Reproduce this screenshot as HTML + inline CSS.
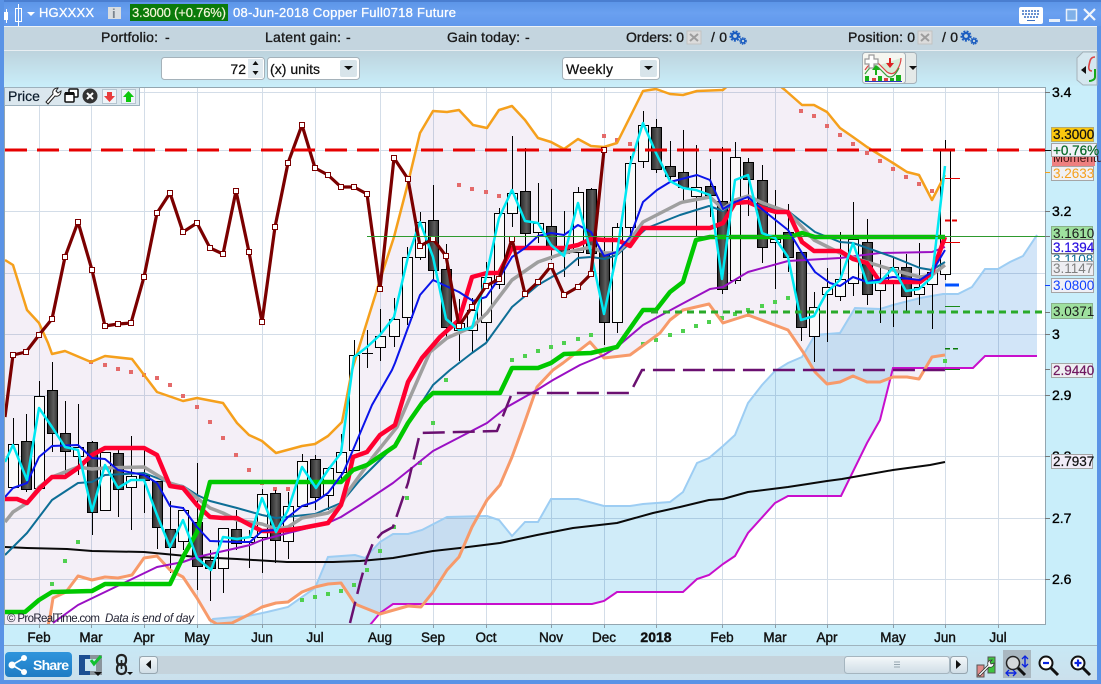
<!DOCTYPE html>
<html><head><meta charset="utf-8"><title>HGXXXX</title>
<style>
html,body{margin:0;padding:0;width:1101px;height:684px;overflow:hidden;background:#5e97ea}
svg{display:block;position:absolute;left:0;top:0}
text{font-family:"Liberation Sans",sans-serif;font-size:13px}
.t{fill:#fff;font-size:13px;stroke:#fff;stroke-width:.3px}
.b{fill:#1a1a1a;stroke:#1a1a1a;stroke-width:.35px;font-size:14px}
.m{fill:#111;text-anchor:middle;stroke:#111;stroke-width:.4px;font-size:13.5px}
.a{fill:#000;stroke:#000;stroke-width:.35px;font-size:14px}
.c{fill:#111;font-size:14px;stroke:#111;stroke-width:.25px}
.l{font-size:13.5px}
</style></head><body>
<svg width="1101" height="684" viewBox="0 0 1101 684">
<defs>
<linearGradient id="gt" x1="0" y1="0" x2="0" y2="1"><stop offset="0" stop-color="#5a93e6"/><stop offset=".5" stop-color="#6aa0f0"/><stop offset="1" stop-color="#6098ec"/></linearGradient>
<linearGradient id="gb" x1="0" y1="0" x2="0" y2="1"><stop offset="0" stop-color="#bdd3dd"/><stop offset="1" stop-color="#c9eefa"/></linearGradient>
<linearGradient id="gf" x1="0" y1="0" x2="0" y2="1"><stop offset="0" stop-color="#c8e8f5"/><stop offset="1" stop-color="#cbe0ec"/></linearGradient>
<linearGradient id="gd" x1="0" y1="0" x2="1" y2="0"><stop offset="0" stop-color="#2a2a2a"/><stop offset=".6" stop-color="#5c5c5c"/><stop offset="1" stop-color="#333"/></linearGradient>
<linearGradient id="gs" x1="0" y1="0" x2="0" y2="1"><stop offset="0" stop-color="#2f95dc"/><stop offset="1" stop-color="#1f7cc4"/></linearGradient>
<linearGradient id="gw" x1="0" y1="0" x2="0" y2="1"><stop offset="0" stop-color="#f4f8fa"/><stop offset="1" stop-color="#cfdde6"/></linearGradient>
<clipPath id="cc"><rect x="4" y="87" width="1041" height="537"/></clipPath>
</defs>

<!-- frame -->
<rect width="1101" height="684" fill="#5a93e6"/>
<rect x="0" y="0" width="1101" height="26" fill="url(#gt)"/>
<rect x="0" y="0" width="1101" height="2" fill="#4a7ed0"/>
<rect x="4" y="26" width="1093" height="25" fill="#c4d5df"/>
<rect x="4" y="26" width="1093" height="1" fill="#eef3f7"/>
<rect x="4" y="50" width="1093" height="1" fill="#e8eef2"/>
<rect x="4" y="51" width="1093" height="36" fill="url(#gb)"/>
<rect x="4" y="624" width="1093" height="21" fill="#c9eefa"/>
<rect x="4" y="645" width="1093" height="1" fill="#9fb3bd"/>
<rect x="4" y="646" width="1093" height="34" fill="url(#gf)"/>
<rect x="1045" y="87" width="52" height="537" fill="#c9eefa"/>

<!-- chart -->
<g clip-path="url(#cc)">
<rect x="4" y="87" width="1041" height="537" fill="#fff"/>
<g stroke="#d3dde8" stroke-width="1" shape-rendering="crispEdges" fill="none">
<path d="M39.5 87V624M91.5 87V624M144.5 87V624M197.5 87V624M262.5 87V624M315.5 87V624M380.5 87V624M433.5 87V624M486.5 87V624M551.5 87V624M604.5 87V624M656.5 87V624M722.5 87V624M775.5 87V624M827.5 87V624M893.5 87V624M945.5 87V624M998.5 87V624"/>
<path d="M4 92.5H1045M4 150.5H1045M4 211.5H1045M4 273.5H1045M4 334.5H1045M4 395.5H1045M4 456.5H1045M4 518.5H1045M4 579.5H1045"/>
</g>
<polygon style="mix-blend-mode:multiply" fill="#f4eff7" points="5,260 13,265 27,310 39,323 48,343 52,354 65,351 91,362 105,356 132,359 157,392 183,401 197,398 223,403 237,423 249,435 262,441 276,453 302,446 315,444 328,436 342,422 352,370 380,280 394,237 408,183 420,133 433,111 447,112 459,110 473,125 487,128 499,110 512,106 525,120 538,138 551,142 564,149 578,139 591,146 604,147 617,143 643,91 656,89 670,94 683,95 697,91 723,90 732,82 775,82 785,90 802,105 814,105 827,112 840,128 853,137 867,147 880,155 893,163 907,172 919,175 932,200 945,175 945,355 932,357 919,379 907,377 893,377 880,382 867,382 853,376 840,382 827,384 815,372 803,352 788,330 748,315 723,323 709,304 683,310 670,320 660,333 630,355 604,358 590,342 563,363 553,370 537,387 523,427 512,457 500,485 487,500 472,527 459,557 447,570 433,592 421,607 408,606 380,614 355,604 341,583 328,584 315,587 302,592 288,602 276,603 262,607 248,615 232,623 217,624 210,620 197,598 183,577 170,570 157,556 144,558 132,575 118,578 105,577 92,580 78,576 66,592 53,598 50,617 47,630 5,630"/>
<polygon style="mix-blend-mode:multiply" fill="#d0ecf9" points="210,622 213,619 235,617 248,616 267,612 288,607 302,597 315,588 328,557 355,555 365,558 380,542 393,534 408,534 422,530 447,517 487,516 499,520 512,536 525,522 538,522 551,499 578,499 604,506 630,506 643,504 670,502 683,492 697,463 709,458 723,446 735,435 748,403 762,385 775,371 788,363 802,357 815,335 840,333 855,308 880,309 893,305 920,298 943,294 945,294 945,368 893,368 880,420 867,443 841,496 788,496 775,503 748,533 735,556 723,564 709,575 697,579 683,592 617,592 604,601 592,604 393,604 380,613 370,625 210,625"/>
<polygon style="mix-blend-mode:multiply" fill="#d2e5f8" points="945,294 958,294 972,287 985,269 998,269 1010,262 1023,256 1037,235 1037,356 985,356 973,368 945,368"/>
<polyline fill="none" stroke="#9dcdf3" stroke-width="2" points="210,622 213,619 235,617 248,616 267,612 288,607 302,597 315,588 328,557 355,555 365,558 380,542 393,534 408,534 422,530 447,517 487,516 499,520 512,536 525,522 538,522 551,499 578,499 604,506 630,506 643,504 670,502 683,492 697,463 709,458 723,446 735,435 748,403 762,385 775,371 788,363 802,357 815,335 840,333 855,308 880,309 893,305 920,298 943,294 958,294 972,287 985,269 998,269 1010,262 1023,256 1037,235"/>
<polyline fill="none" stroke="#c80fcc" stroke-width="2" points="370,625 380,613 393,604 592,604 604,601 617,592 683,592 697,579 709,575 723,564 735,556 748,533 775,503 788,496 841,496 867,443 880,420 893,368 973,368 985,356 1037,356"/>

<!-- red / green dots -->
<g fill="#e46a6a" shape-rendering="crispEdges">
<rect x="89" y="360" width="4" height="4"/><rect x="103" y="363" width="4" height="4"/><rect x="116" y="367" width="4" height="4"/><rect x="129" y="370" width="4" height="4"/><rect x="142" y="373" width="4" height="4"/><rect x="155" y="376" width="4" height="4"/><rect x="168" y="383" width="4" height="4"/><rect x="181" y="394" width="4" height="4"/><rect x="195" y="405" width="4" height="4"/><rect x="208" y="420" width="4" height="4"/><rect x="221" y="436" width="4" height="4"/><rect x="234" y="453" width="4" height="4"/><rect x="247" y="468" width="4" height="4"/><rect x="260" y="481" width="4" height="4"/><rect x="273" y="487" width="4" height="4"/><rect x="286" y="487" width="4" height="4"/>
<rect x="457" y="183" width="4" height="4"/><rect x="470" y="187" width="4" height="4"/><rect x="484" y="190" width="4" height="4"/><rect x="497" y="194" width="4" height="4"/><rect x="602" y="134" width="4" height="4"/><rect x="615" y="138" width="4" height="4"/><rect x="628" y="142" width="4" height="4"/>
<rect x="799" y="109" width="4" height="4"/><rect x="812" y="114" width="4" height="4"/><rect x="825" y="124" width="4" height="4"/><rect x="838" y="133" width="4" height="4"/><rect x="851" y="142" width="4" height="4"/><rect x="865" y="151" width="4" height="4"/><rect x="878" y="159" width="4" height="4"/><rect x="891" y="167" width="4" height="4"/><rect x="904" y="175" width="4" height="4"/><rect x="917" y="182" width="4" height="4"/><rect x="930" y="189" width="4" height="4"/>
</g>
<g fill="#4fd04f" shape-rendering="crispEdges">
<rect x="76" y="540" width="4" height="4"/><rect x="63" y="559" width="4" height="4"/><rect x="50" y="582" width="4" height="4"/><rect x="300" y="598" width="4" height="4"/><rect x="313" y="595" width="4" height="4"/><rect x="326" y="592" width="4" height="4"/><rect x="339" y="589" width="4" height="4"/><rect x="352" y="583" width="4" height="4"/><rect x="365" y="568" width="4" height="4"/><rect x="378" y="549" width="4" height="4"/><rect x="392" y="525" width="4" height="4"/><rect x="405" y="496" width="4" height="4"/><rect x="418" y="461" width="4" height="4"/><rect x="431" y="421" width="4" height="4"/><rect x="444" y="378" width="4" height="4"/>
<rect x="510" y="358" width="4" height="4"/><rect x="523" y="354" width="4" height="4"/><rect x="536" y="349" width="4" height="4"/><rect x="549" y="345" width="4" height="4"/><rect x="562" y="341" width="4" height="4"/><rect x="576" y="337" width="4" height="4"/><rect x="589" y="333" width="4" height="4"/><rect x="641" y="342" width="4" height="4"/><rect x="654" y="338" width="4" height="4"/><rect x="668" y="333" width="4" height="4"/><rect x="681" y="329" width="4" height="4"/><rect x="694" y="324" width="4" height="4"/><rect x="707" y="320" width="4" height="4"/><rect x="720" y="316" width="4" height="4"/><rect x="733" y="312" width="4" height="4"/><rect x="746" y="308" width="4" height="4"/><rect x="760" y="304" width="4" height="4"/><rect x="773" y="300" width="4" height="4"/><rect x="786" y="296" width="4" height="4"/><rect x="943" y="359" width="4" height="4"/>
</g>

<!-- candles -->
<g shape-rendering="crispEdges" stroke="#000" stroke-width="1">
<path fill="none" d="M13.5 418V487M26.5 414V492M39.5 381V488M52.5 362V452M65.5 401V475M78.5 404V475M92.5 441V535M105.5 452V511M118.5 450V517M131.5 436V530M144.5 450V513M157.5 481V549M170.5 501V573M183.5 507V550M197.5 463V590M210.5 550V601M223.5 528V593M236.5 510V550M249.5 530V568M262.5 489V573M275.5 490V563M288.5 492V559M302.5 454V507M315.5 455V510M328.5 467V510M341.5 434V480M354.5 340V450M367.5 330V368M362 353.5H373M380.5 309V361M394.5 298V347M407.5 247V325M420.5 212V260M433.5 185V280M446.5 244V338M459.5 299V361M472.5 298V353M486.5 262V341M499.5 208V289M512.5 136V227M525.5 148V247M538.5 183V243M551.5 189V260M564.5 211V277M578.5 187V266M591.5 188V253M604.5 237V345M617.5 223V333M630.5 156V237M643.5 111V168M656.5 119V173M670.5 141V180M683.5 130V202M696.5 145V237M710.5 159V217M722.5 147V294M735.5 142V284M748.5 158V216M762.5 165V263M775.5 190V289M788.5 204V272M801.5 252V341M814.5 292V362M827.5 268V342M840.5 232V301M853.5 202V296M867.5 219V305M880.5 260V323M893.5 257V327M906.5 254V313M919.5 243V305M932.5 265V329M945.5 140V280"/>
<g fill="#fafafa">
<rect x="8.5" y="444.5" width="10" height="43"/><rect x="34.5" y="396.5" width="10" height="92"/><rect x="73.5" y="447.5" width="10" height="9"/><rect x="100.5" y="452.5" width="10" height="58"/><rect x="126.5" y="476.5" width="10" height="11"/><rect x="178.5" y="510.5" width="10" height="31"/><rect x="218.5" y="528.5" width="10" height="40"/><rect x="244.5" y="537.5" width="10" height="5"/><rect x="257.5" y="494.5" width="10" height="43"/><rect x="283.5" y="506.5" width="10" height="35"/><rect x="297.5" y="461.5" width="10" height="45"/><rect x="323.5" y="468.5" width="10" height="27"/><rect x="336.5" y="452.5" width="10" height="20"/><rect x="349.5" y="355.5" width="10" height="95"/>
<rect x="375.5" y="336.5" width="10" height="11"/><rect x="389.5" y="319.5" width="10" height="17"/><rect x="402.5" y="257.5" width="10" height="60"/><rect x="415.5" y="222.5" width="10" height="35"/><rect x="454.5" y="323.5" width="10" height="7"/><rect x="467.5" y="310.5" width="10" height="20"/><rect x="481.5" y="277.5" width="10" height="45"/><rect x="494.5" y="213.5" width="10" height="71"/><rect x="507.5" y="193.5" width="10" height="20"/><rect x="533.5" y="223.5" width="10" height="9"/><rect x="573.5" y="192.5" width="10" height="60"/><rect x="612.5" y="227.5" width="10" height="95"/><rect x="625.5" y="163.5" width="10" height="64"/><rect x="638.5" y="125.5" width="10" height="36"/>
<rect x="691.5" y="187.5" width="10" height="9"/><rect x="730.5" y="157.5" width="10" height="123"/><rect x="770.5" y="239.5" width="10" height="3"/><rect x="809.5" y="307.5" width="10" height="29"/><rect x="822.5" y="287.5" width="10" height="7"/><rect x="835.5" y="279.5" width="10" height="17"/><rect x="848.5" y="239.5" width="10" height="44"/><rect x="875.5" y="280.5" width="10" height="10"/><rect x="888.5" y="267.5" width="10" height="16"/><rect x="914.5" y="287.5" width="10" height="7"/><rect x="927.5" y="272.5" width="10" height="12"/><rect x="940.5" y="150.5" width="10" height="124"/>
</g>
<g fill="url(#gd)">
<rect x="21.5" y="441.5" width="10" height="48"/><rect x="47.5" y="390.5" width="10" height="43"/><rect x="60.5" y="433.5" width="10" height="18"/><rect x="87.5" y="442.5" width="10" height="70"/><rect x="113.5" y="453.5" width="10" height="36"/><rect x="139.5" y="475.5" width="10" height="5"/><rect x="152.5" y="481.5" width="10" height="46"/><rect x="165.5" y="529.5" width="10" height="18"/><rect x="192.5" y="522.5" width="10" height="44"/><rect x="205.5" y="560.5" width="10" height="8"/><rect x="231.5" y="529.5" width="10" height="14"/><rect x="270.5" y="493.5" width="10" height="47"/><rect x="310.5" y="459.5" width="10" height="38"/>
<rect x="428.5" y="220.5" width="10" height="50"/><rect x="441.5" y="269.5" width="10" height="58"/><rect x="520.5" y="191.5" width="10" height="42"/><rect x="546.5" y="226.5" width="10" height="21"/><rect x="559.5" y="247.5" width="10" height="6"/><rect x="586.5" y="189.5" width="10" height="64"/><rect x="599.5" y="252.5" width="10" height="70"/><rect x="651.5" y="127.5" width="10" height="42"/><rect x="665.5" y="166.5" width="10" height="10"/><rect x="678.5" y="172.5" width="10" height="15"/>
<rect x="705.5" y="186.5" width="10" height="9"/><rect x="717.5" y="201.5" width="10" height="88"/><rect x="743.5" y="162.5" width="10" height="17"/><rect x="757.5" y="180.5" width="10" height="67"/><rect x="783.5" y="232.5" width="10" height="25"/><rect x="796.5" y="252.5" width="10" height="75"/><rect x="862.5" y="242.5" width="10" height="52"/><rect x="901.5" y="267.5" width="10" height="29"/>
</g>
</g>

<!-- lines -->
<g fill="none" stroke-linejoin="round">
<polyline stroke="#0a0a0a" stroke-width="2" points="5,547 27,548 67,549 92,551 144,552 197,557 237,559 287,562 333,562 360,561 393,558 433,551 460,548 500,543 537,535 573,528 617,523 653,513 680,507 709,500 723,499 748,492 788,487 827,481 842,479 893,470 930,465 945,462"/>
<polyline stroke="#f79a6a" stroke-width="3" points="47,630 50,617 53,598 66,592 78,576 92,580 105,577 118,578 132,575 144,558 157,556 170,570 183,577 197,598 210,620 217,624 232,623 248,615 262,607 276,603 288,602 302,592 315,587 328,584 341,583 355,604 380,614 408,606 421,607 433,592 447,570 459,557 472,527 487,500 500,485 512,457 523,427 537,387 553,370 563,363 590,342 604,358 630,355 660,333 670,320 683,310 709,304 723,323 748,315 788,330 803,352 815,372 827,384 840,382 853,376 867,382 880,382 893,377 907,377 919,379 932,357 945,355"/>
<polyline stroke="#f5a01c" stroke-width="2.5" points="5,260 13,265 27,310 39,323 48,343 52,354 65,351 91,362 105,356 132,359 157,392 183,401 197,398 223,403 237,423 249,435 262,441 276,453 302,446 315,444 328,436 342,422 352,370 380,280 394,237 408,183 420,133 433,111 447,112 459,110 473,125 487,128 499,110 512,106 525,120 538,138 551,142 564,149 578,139 591,146 604,147 617,143 643,91 656,89 670,94 683,95 697,91 723,90 732,82 775,82 785,90 802,105 814,105 827,112 840,128 853,137 867,147 880,155 893,163 907,172 919,175 932,200 945,175"/>
<polyline stroke="#9a10c4" stroke-width="2" points="53,623 78,605 157,567 183,562 197,557 237,548 250,545 262,540 288,533 328,523 341,517 360,505 393,483 433,451 460,437 487,423 507,407 537,390 553,380 580,365 604,355 617,347 643,325 680,305 710,289 723,287 748,272 788,261 840,258 880,253 932,252 945,247"/>
<polyline stroke="#0d6e96" stroke-width="2" points="5,555 27,533 52,500 78,483 92,482 105,475 144,473 157,478 170,483 183,486 197,495 210,501 237,508 262,515 276,518 315,514 341,503 360,480 380,460 395,445 408,423 422,402 433,385 450,370 472,353 486,343 512,307 538,285 564,270 578,258 591,257 605,259 617,255 630,243 647,228 680,215 709,206 723,211 735,203 748,202 763,207 788,211 815,232 840,242 853,243 893,257 920,268 932,270 945,262"/>
<polyline stroke="#9f9f9f" stroke-width="3.5" points="5,522 13,512 27,503 39,487 52,477 78,467 92,469 105,468 144,467 157,475 170,483 183,487 197,498 210,508 223,513 237,520 262,524 276,529 288,527 302,518 328,513 341,505 347,493 373,457 397,427 422,370 430,352 447,338 472,327 487,313 512,280 538,262 564,253 591,247 605,253 617,253 630,240 643,222 680,203 683,202 710,197 723,209 735,200 748,196 763,203 788,212 802,227 814,240 840,253 867,262 880,266 893,270 920,277 932,275 945,265"/>
<polyline stroke="#ff0030" stroke-width="4.5" points="5,499 17,499 27,503 40,488 52,477 65,477 78,468 92,455 105,448 144,448 157,455 170,486 183,488 197,505 210,517 223,518 237,518 250,525 262,531 276,531 288,530 302,528 328,523 341,505 348,480 353,457 367,452 380,435 395,425 408,382 422,358 440,337 459,320 472,277 487,273 499,273 512,248 564,248 578,245 591,239 604,240 617,240 630,246 643,228 710,228 723,223 735,203 748,202 762,208 776,212 788,212 802,242 814,251 840,251 853,259 867,263 880,282 920,282 932,273 945,237"/>
<polyline stroke="#00c800" stroke-width="4.5" points="5,612 25,612 39,600 52,592 92,591 105,584 170,584 183,557 197,532 210,482 341,482 353,470 367,465 395,446 408,423 422,403 433,393 500,393 512,368 538,368 551,363 564,354 591,353 617,347 643,310 656,310 670,292 683,282 696,240 710,237 790,237 802,233 815,237 945,237"/>
<polyline stroke="#0a14ea" stroke-width="2" points="5,497 13,488 27,483 39,457 52,446 78,445 92,458 105,459 118,470 144,475 157,483 170,506 183,508 197,527 210,541 237,542 250,542 262,531 276,530 288,517 302,506 315,502 328,493 343,473 353,450 372,405 392,370 395,363 420,295 433,280 459,292 473,301 486,297 500,277 512,257 525,248 538,236 551,233 564,235 578,225 591,232 604,256 617,252 630,237 643,202 657,190 670,182 697,175 710,180 723,209 735,202 748,197 763,210 788,230 802,253 815,272 830,283 840,286 853,277 867,282 893,277 920,280 932,272 945,250"/>
<polyline stroke="#00e8f2" stroke-width="2.5" points="5,462 13,445 27,480 39,408 52,427 65,447 78,450 92,511 105,465 118,488 131,480 144,480 157,515 170,547 183,520 197,558 211,570 223,537 237,539 250,537 262,498 276,532 288,510 302,467 316,488 328,470 341,453 354,357 367,347 380,335 394,317 408,257 420,222 433,257 446,319 459,330 472,328 486,277 499,218 512,190 525,221 538,223 551,245 564,256 578,203 591,253 604,314 617,253 630,165 643,123 656,153 670,181 683,188 696,190 710,195 722,279 735,180 748,175 762,233 775,238 788,257 801,320 814,316 827,292 840,280 853,243 867,283 880,282 893,268 906,291 919,289 932,277 945,166"/>
<polyline stroke="#6a1070" stroke-width="2.5" stroke-dasharray="22 8" points="350,623 360,583 367,558 373,543 382,533 393,527 408,483 420,433 497,431 512,393 630,393 642,370 945,370" />
<polyline stroke="#7b0000" stroke-width="3.2" points="5,417 13,355 26,352 39,335 52,319 65,257 78,222 92,270 105,326 118,324 131,323 144,277 157,213 170,193 183,232 197,223 210,248 223,254 236,191 249,252 262,322 275,227 288,163 302,125 315,168 328,175 341,187 354,187 367,194 380,289 394,158 408,179 420,246 433,239 446,256 459,326 472,307 486,286 499,279 512,239 525,294 538,282 551,266 564,295 578,287 591,274 604,150"/>
</g>
<g fill="#fff" stroke="#7b0000" stroke-width="1" shape-rendering="crispEdges">
<path d="M10.5 352.5h5v5h-5zM23.5 349.5h5v5h-5zM36.5 332.5h5v5h-5zM49.5 316.5h5v5h-5zM62.5 254.5h5v5h-5zM75.5 219.5h5v5h-5zM89.5 267.5h5v5h-5zM102.5 323.5h5v5h-5zM115.5 321.5h5v5h-5zM128.5 320.5h5v5h-5zM141.5 274.5h5v5h-5zM154.5 210.5h5v5h-5zM167.5 190.5h5v5h-5zM180.5 229.5h5v5h-5zM194.5 220.5h5v5h-5zM207.5 245.5h5v5h-5zM220.5 251.5h5v5h-5zM233.5 188.5h5v5h-5zM246.5 249.5h5v5h-5zM259.5 319.5h5v5h-5zM272.5 224.5h5v5h-5zM285.5 160.5h5v5h-5zM299.5 122.5h5v5h-5zM312.5 165.5h5v5h-5zM325.5 172.5h5v5h-5zM338.5 184.5h5v5h-5zM351.5 184.5h5v5h-5zM364.5 191.5h5v5h-5zM377.5 286.5h5v5h-5zM391.5 155.5h5v5h-5zM405.5 176.5h5v5h-5zM417.5 243.5h5v5h-5zM430.5 236.5h5v5h-5zM443.5 253.5h5v5h-5zM456.5 323.5h5v5h-5zM469.5 304.5h5v5h-5zM483.5 283.5h5v5h-5zM496.5 276.5h5v5h-5zM509.5 236.5h5v5h-5zM522.5 291.5h5v5h-5zM535.5 279.5h5v5h-5zM548.5 263.5h5v5h-5zM561.5 292.5h5v5h-5zM575.5 284.5h5v5h-5zM588.5 271.5h5v5h-5zM601.5 147.5h5v5h-5z"/>
</g>
<!-- horizontal levels -->
<g fill="none" shape-rendering="crispEdges">
<path stroke="#e60000" stroke-width="3" stroke-dasharray="22 10" d="M5 150H1045"/>
<path stroke="#2aaa2a" stroke-width="3" stroke-dasharray="7 5" d="M651 312H1045"/>
<path stroke="#2e9a2e" stroke-width="1" d="M367 236.5H1045"/>
<path stroke="#0050ff" stroke-width="3" d="M945 285H959"/>
<path stroke="#e60000" stroke-width="1" d="M945 178.5H960M945 242.5H960"/>
<path stroke="#e60000" stroke-width="2" stroke-dasharray="5 2" d="M945 220.5H959"/>
<path stroke="#1a8a1a" stroke-width="1" d="M945 306.5H960"/>
<path stroke="#0a7a0a" stroke-width="1.5" stroke-dasharray="5 3" d="M945 348.5H960"/>
<path stroke="#0a7a0a" stroke-width="1" d="M945 369.5H960"/>
</g>
<text x="7" y="622" style="font-size:11.5px" fill="#223" textLength="93">© ProRealTime.com</text>
<text x="105" y="622" style="font-size:11.5px;font-style:italic" fill="#223" textLength="89">Data is end of day</text>
</g>
<rect x="4.5" y="87.5" width="1041" height="537" fill="none" stroke="#93a6b0" stroke-width="1" shape-rendering="crispEdges"/>
<rect x="0" y="0" width="4" height="684" fill="#5a93e6"/>

<!-- title bar -->
<g fill="#fff">
<rect x="4" y="12" width="4" height="8"/><rect x="6" y="9" width="1" height="14"/>
<rect x="15.5" y="8.5" width="6" height="13" fill="none" stroke="#fff"/><rect x="18" y="4" width="1" height="22"/>
<polygon points="27,12 35,12 31,16"/>
</g>
<text x="39" y="17" class="t" textLength="55">HGXXXX</text>
<rect x="108" y="7" width="13" height="12" fill="#d8dde1"/>
<text x="112" y="18" style="font-size:13px;font-weight:bold" fill="#7a848e">i</text>
<rect x="130" y="4" width="98" height="17" fill="#0a7a0a"/>
<text x="132" y="17" style="font-size:13px;stroke:#f6f6d8;stroke-width:.2px" fill="#f6f6d8" textLength="94">3.3000 (+0.76%)</text>
<text x="233" y="17" class="t" textLength="223">08-Jun-2018 Copper Full0718 Future</text>
<!-- keyboard -->
<rect x="1019" y="7" width="24" height="17" rx="2" fill="#fff"/>
<path d="M1022 11h18M1022 14h18M1024 17h14" stroke="#3a6fc0" stroke-width="1.6" stroke-dasharray="2 1" fill="none"/>
<rect x="1027" y="20" width="8" height="1" fill="#3a6fc0"/>
<rect x="1049" y="19" width="11" height="3" fill="#e8f0fa"/>
<rect x="1066.5" y="9.5" width="10" height="11" fill="#7fb0e8" stroke="#e8f0fa" stroke-width="1.5"/>
<path d="M1084 9L1095 20M1095 9L1084 20" stroke="#f2f6fc" stroke-width="2.2"/>

<!-- info row -->
<text x="101" y="42" class="b" textLength="57">Portfolio:</text><text x="165" y="42" class="b">-</text>
<text x="265" y="42" class="b" textLength="76">Latent gain:</text><text x="346" y="42" class="b">-</text>
<text x="447" y="42" class="b" textLength="73">Gain today:</text><text x="525" y="42" class="b">-</text>
<text x="626" y="42" class="b" textLength="58">Orders: 0</text>
<rect x="687" y="31" width="14" height="13" fill="#dcdcdc" stroke="#c2c2c2"/>
<path d="M690 34l8 7M698 34l-8 7" stroke="#9d9d9d" stroke-width="2"/>
<text x="711" y="42" class="b" textLength="16">/ 0</text>
<g fill="none" stroke="#1a5cc0"><circle cx="735" cy="36" r="3" stroke-width="2.2"/><circle cx="735" cy="36" r="4.8" stroke-width="1.6" stroke-dasharray="2 1.3"/><circle cx="743" cy="41" r="2" stroke-width="1.6"/><circle cx="743" cy="41" r="3.2" stroke-width="1.2" stroke-dasharray="1.4 .9"/></g>
<text x="848" y="42" class="b" textLength="67">Position: 0</text>
<rect x="918" y="31" width="14" height="13" fill="#dcdcdc" stroke="#c2c2c2"/>
<path d="M921 34l8 7M929 34l-8 7" stroke="#9d9d9d" stroke-width="2"/>
<text x="942" y="42" class="b" textLength="16">/ 0</text>
<g fill="none" stroke="#1a5cc0"><circle cx="966" cy="36" r="3" stroke-width="2.2"/><circle cx="966" cy="36" r="4.8" stroke-width="1.6" stroke-dasharray="2 1.3"/><circle cx="974" cy="41" r="2" stroke-width="1.6"/><circle cx="974" cy="41" r="3.2" stroke-width="1.2" stroke-dasharray="1.4 .9"/></g>

<!-- toolbar -->
<rect x="161.5" y="57.5" width="103" height="22" rx="3" fill="#fff" stroke="#a5b2ba"/>
<text x="246" y="74" text-anchor="end" class="c">72</text>
<rect x="248" y="59" width="15" height="19" fill="#dfe9ef"/>
<polygon points="255.5,61 252.5,65 258.5,65" fill="#111"/><polygon points="252.5,71 258.5,71 255.5,75" fill="#111"/>
<rect x="267.5" y="57.5" width="92" height="22" rx="3" fill="#fff" stroke="#a5b2ba"/>
<text x="270" y="74" class="c" textLength="50">(x) units</text>
<rect x="340" y="60" width="17" height="17" rx="2" fill="#d8e4ea"/>
<polygon points="344,66 353,66 348.5,70" fill="#111"/>
<rect x="562.5" y="57.5" width="97" height="22" rx="3" fill="#fff" stroke="#a5b2ba"/>
<text x="566" y="74" class="c" textLength="47">Weekly</text>
<rect x="640" y="60" width="17" height="17" rx="2" fill="#d8e4ea"/>
<polygon points="644,66 653,66 648.5,70" fill="#111"/>
<rect x="862.5" y="52.5" width="54" height="31" rx="3" fill="#e4e9e8" stroke="#a5b2ba"/>
<rect x="862.5" y="52.5" width="43" height="31" rx="3" fill="#f6f6f0" stroke="#a5b2ba"/>
<polygon points="909,66 917,66 913,70" fill="#111"/>
<path d="M865 70q8-12 14-6t8 8q6 4 10-2t4-12" fill="#d8ecd8" stroke="#d44" stroke-width="1.2"/>
<path d="M865 74q8-12 14-6t8 8q6 4 12-8" fill="none" stroke="#3aa03a" stroke-width="1.2"/>
<path d="M869 55h5v4h4v5h-4v4h-5v-4h-4v-5h4z" fill="#fff" stroke="#999" stroke-width="1.2"/>
<rect x="865" y="76" width="4" height="5" fill="#18b018"/><rect x="872" y="78" width="4" height="3" fill="#d44"/><rect x="878" y="76" width="4" height="5" fill="#18b018"/><rect x="884" y="78" width="4" height="3" fill="#d44"/><rect x="890" y="78" width="4" height="3" fill="#18b018"/><rect x="896" y="75" width="5" height="6" fill="#18b018"/>
<rect x="865" y="81" width="37" height="1" fill="#2a3ac0"/>
<path d="M875 75v-5h-3l4-5 4 5h-3v5z" fill="#18b018"/><path d="M889 58v5h-3l4 5 4-5h-3v-5z" fill="#d22"/>
<path d="M1097 52h-14l-6 6v22l6 5h14z" fill="#d5e7ef" stroke="#a5b2ba"/>
<polygon points="1086,74 1081,70 1086,66" fill="#111"/>
<path d="M1092 71c-5 0-3-6-2-10q1-4 5-4" fill="none" stroke="#d44" stroke-width="1.6"/>
<path d="M1095 69v8c0 3-4 4-6 4" fill="none" stroke="#18a818" stroke-width="2"/>

<!-- price tab -->
<rect x="4.5" y="87.5" width="135" height="18" fill="#dbe7ee" stroke="#9db1bd"/>
<text x="8" y="101" style="font-size:14px;stroke:#0c1c2c;stroke-width:.2px" fill="#0c1c2c">Price</text>
<path d="M46 102l7-8c-1-3 1-6 5-6l-2 3 2 2 3-2c0 4-3 6-6 5l-7 8z" fill="#fff" stroke="#222" stroke-width="1"/>
<rect x="69" y="89" width="9" height="8" rx="1" fill="#fff" stroke="#111" stroke-width="1.5"/>
<rect x="65" y="93" width="9" height="9" rx="1" fill="#fff" stroke="#111" stroke-width="1.5"/>
<rect x="65" y="92" width="9" height="3" fill="#111"/>
<circle cx="90" cy="96" r="7.5" fill="#333"/>
<path d="M87 93l6 6M93 93l-6 6" stroke="#fff" stroke-width="2"/>
<rect x="102.5" y="89.5" width="14" height="14" fill="#eef4f8" stroke="#b5c5d0"/>
<path d="M107 92h5v4h3l-5.5 6-5.5-6h3z" fill="#e83c3c"/>
<rect x="121.5" y="89.5" width="14" height="14" fill="#eef4f8" stroke="#b5c5d0"/>
<path d="M126 102h5v-5h3l-5.5-6-5.5 6h3z" fill="#0cc80c"/>

<!-- right axis -->
<path d="M1045 92.5h5M1045 211.5h5M1045 334.5h5M1045 395.5h5M1045 518.5h5M1045 579.5h5M1045 456.5h5M1045 236.5h5M1045 312.5h5M1045 369.5h5" stroke="#777" shape-rendering="crispEdges"/>
<path d="M1045 150.5h6" stroke="#111" shape-rendering="crispEdges"/>
<path d="M1045 172.5h5" stroke="#f5a01c" shape-rendering="crispEdges"/>
<path d="M1045 285.5h5" stroke="#1040ff" shape-rendering="crispEdges"/>
<text x="1052" y="97" class="a">3.4</text>
<text x="1052" y="216" class="a">3.2</text>
<text x="1052" y="339" class="a">3</text>
<text x="1052" y="400" class="a">2.9</text>
<text x="1052" y="523" class="a">2.7</text>
<text x="1052" y="584" class="a">2.6</text>
<text x="1052" y="461" class="a">2.8</text>

<rect x="1052" y="156" width="43" height="10" fill="#ee8080"/>
<text x="1053" y="162" style="font-size:12px" fill="#401010">Momentum</text>
<rect x="1051.5" y="127.5" width="42" height="14" fill="#fbc80e" stroke="#b5aa70"/>
<text x="1053" y="139" class="l" style="stroke:#111;stroke-width:.2px" fill="#111">3.3000</text>
<rect x="1051.5" y="143.5" width="45" height="13" fill="#f1f1f8" stroke="#a5a5a5"/>
<text x="1053" y="155" class="l" style="stroke:#0a6a2a;stroke-width:.25px" fill="#0a6a2a">+0.76%</text>
<rect x="1051.5" y="166.5" width="42" height="14" fill="#f0f0f4" stroke="#a5a5a5"/>
<text x="1053" y="178" class="l" fill="#f5a01c">3.2633</text>
<rect x="1051.5" y="254.5" width="42" height="8" fill="#fff" stroke="#bbb"/>
<text x="1053" y="264" class="l" fill="#0d6e96">3.1108</text>
<rect x="1051.5" y="226.5" width="41" height="13" fill="#9ee09e" stroke="#8ab08a"/>
<text x="1053" y="238" class="l" fill="#1a1a1a">3.1610</text>
<rect x="1051.5" y="239.5" width="42" height="14" fill="#fff" stroke="#777"/>
<text x="1053" y="252" class="l" style="stroke:#2a10e0;stroke-width:.2px" fill="#2a10e0">3.1394</text>
<rect x="1051.5" y="261.5" width="42" height="14" fill="#eeeef2" stroke="#a5a5a5"/>
<text x="1053" y="273" class="l" fill="#808080">3.1147</text>
<rect x="1051.5" y="278.5" width="42" height="14" fill="#f0f0f6" stroke="#a5a5a5"/>
<text x="1053" y="290" class="l" fill="#1040ff">3.0800</text>
<rect x="1051.5" y="303.5" width="41" height="15" fill="#9ee09e" stroke="#8ab08a"/>
<text x="1053" y="316" class="l" fill="#1a1a1a">3.0371</text>
<rect x="1051.5" y="363.5" width="41" height="14" fill="#eeeef2" stroke="#a5a5a5"/>
<text x="1053" y="375" class="l" style="stroke:#701860;stroke-width:.2px" fill="#701860">2.9440</text>
<rect x="1051.5" y="454.5" width="41" height="14" fill="#f1ecf8" stroke="#a5a5a5"/>
<text x="1053" y="466" class="l" style="stroke:#111;stroke-width:.2px" fill="#111">2.7937</text>

<!-- bottom axis -->
<path d="M39.5 624v4M91.5 624v4M144.5 624v4M197.5 624v4M262.5 624v4M315.5 624v4M380.5 624v4M433.5 624v4M486.5 624v4M551.5 624v4M604.5 624v4M656.5 624v4M722.5 624v4M775.5 624v4M827.5 624v4M893.5 624v4M945.5 624v4M998.5 624v4" stroke="#8c9ca6" shape-rendering="crispEdges"/>
<g>
<text x="39" y="642" class="m">Feb</text><text x="91" y="642" class="m">Mar</text><text x="144" y="642" class="m">Apr</text><text x="197" y="642" class="m">May</text><text x="262" y="642" class="m">Jun</text><text x="315" y="642" class="m">Jul</text><text x="380" y="642" class="m">Aug</text><text x="433" y="642" class="m">Sep</text><text x="486" y="642" class="m">Oct</text><text x="551" y="642" class="m">Nov</text><text x="604" y="642" class="m">Dec</text>
<text x="656" y="642" class="m" style="font-weight:bold;font-size:14px">2018</text>
<text x="722" y="642" class="m">Feb</text><text x="775" y="642" class="m">Mar</text><text x="827" y="642" class="m">Apr</text><text x="893" y="642" class="m">May</text><text x="945" y="642" class="m">Jun</text><text x="998" y="642" class="m">Jul</text>
</g>

<!-- bottom toolbar -->
<rect x="5" y="652" width="67" height="25" rx="4" fill="url(#gs)"/>
<path d="M24 658L12 665L24 672" fill="none" stroke="#fff" stroke-width="1.6"/>
<circle cx="12" cy="665" r="3.5" fill="#fff"/><circle cx="24" cy="658" r="3" fill="#fff"/><circle cx="24" cy="672" r="3" fill="#fff"/>
<text x="33" y="670" style="font-size:14px;font-weight:bold" fill="#fff" textLength="36">Share</text>

<path d="M79 655h11v4h-5v12h5v4H79z" fill="#1c4e92"/>
<path d="M90 655h12v20H90v-4h6V659h-6z" fill="#8a949c"/>
<path d="M91 660l3 4 7-8" fill="none" stroke="#12c030" stroke-width="3"/>
<polygon points="94,672 102,672 98,676" fill="#111"/>
<g fill="none" stroke="#222" stroke-width="2.2"><rect x="117" y="655" width="9" height="10" rx="4"/><rect x="117" y="664" width="9" height="10" rx="4"/></g>
<path d="M121.5 660v9" stroke="#222" stroke-width="1.6"/>
<polygon points="127,672 133,672 130,675" fill="#111"/>

<rect x="139" y="656" width="828" height="18" fill="#c5d3dc"/>
<rect x="139.5" y="656.5" width="18" height="17" rx="3" fill="url(#gw)" stroke="#96a6b0"/>
<polygon points="151,660 151,669 146,664.5" fill="#111"/>
<rect x="844.5" y="656.5" width="105" height="17" rx="3" fill="url(#gw)" stroke="#a5b5bf"/>
<path d="M894 662h6M894 664.5h6M894 667h6" stroke="#96a6b0"/>
<rect x="950.5" y="656.5" width="17" height="17" rx="3" fill="url(#gw)" stroke="#96a6b0"/>
<polygon points="956,660 956,669 961,664.5" fill="#111"/>

<rect x="977" y="665" width="7" height="12" fill="#e08a8a" stroke="#555"/>
<rect x="988" y="657" width="7" height="16" fill="#3ec43e" stroke="#555"/>
<path d="M978 675l10-10c-1-3 1-5 4-5l-2 2 1 2 3-1c0 3-2 5-5 4l-9 9z" fill="#fff" stroke="#333" stroke-width=".8"/>

<rect x="1003" y="650" width="28" height="28" fill="#a9b7c0"/>
<circle cx="1013" cy="663" r="6.5" fill="#d4d8da" stroke="#222" stroke-width="1.5"/>
<path d="M1018 668l7 7" stroke="#111" stroke-width="3"/>
<path d="M1025 656v11" stroke="#0a22e0" stroke-width="1.5"/><path d="M1022 659l3-3 3 3M1022 664l3 3 3-3" fill="none" stroke="#0a22e0" stroke-width="1.3"/>
<path d="M1006 673h10" stroke="#0a22e0" stroke-width="1.5"/><path d="M1009 670l-3 3 3 3M1013 670l3 3-3 3" fill="none" stroke="#0a22e0" stroke-width="1.3"/>

<circle cx="1046" cy="663" r="6.5" fill="#fff" stroke="#111" stroke-width="2"/>
<path d="M1043 663h6" stroke="#0a22e0" stroke-width="2.2"/>
<path d="M1051 668l7 7" stroke="#111" stroke-width="3"/>
<circle cx="1078" cy="663" r="6.5" fill="#fff" stroke="#111" stroke-width="2"/>
<path d="M1074.5 663h7M1078 659.5v7" stroke="#0a22e0" stroke-width="2.2"/>
<path d="M1083 668l7 7" stroke="#111" stroke-width="3"/>
</svg>
</body></html>
